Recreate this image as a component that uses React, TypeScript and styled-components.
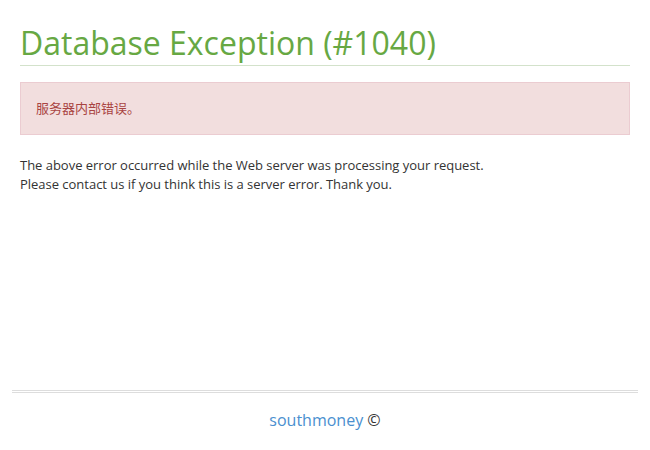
import React from "react";
import styled, { createGlobalStyle } from "styled-components";

const Global = createGlobalStyle`
  html, body { margin: 0; padding: 0; background: #fff; }
  body { font-family: "Open Sans", "Noto Sans CJK SC", sans-serif; color: #333; }
`;

const Page = styled.div`
  display: flex;
  flex-direction: column;
  min-height: 100vh;
`;

const Main = styled.main`
  flex: 1;
  padding: 25px 20px 0;
`;

const Title = styled.h1`
  margin: 0;
  font-size: 32px;
  line-height: 35px;
  font-weight: 400;
  color: #67a843;
  padding-bottom: 5px;
  border-bottom: 1px solid #d3e2cb;
`;

const Alert = styled.div`
  margin-top: 16px;
  padding: 15px 15px 16px;
  background: #f2dede;
  border: 1px solid #ebccd1;
  color: #a94442;
  font-size: 13px;
  line-height: 20px;
`;

const Text = styled.p`
  margin: 21px 0 0;
  font-size: 13px;
  line-height: 19px;
  letter-spacing: -0.02px;
`;

const Footer = styled.footer`
  height: 60px;
  padding: 0 12px;
  box-sizing: border-box;
`;

const Rule = styled.hr`
  margin: 0;
  height: 1px;
  border: 0;
  border-top: 1px solid #ddd;
  border-bottom: 1px solid #ddd;
`;

const FooterText = styled.div`
  text-align: center;
  font-size: 16px;
  line-height: 22px;
  margin-top: 16px;
  color: #333;
`;

const Link = styled.a`
  color: #4a8fcf;
  text-decoration: none;
`;

export default function App() {
  return (
    <Page>
      <Global />
      <Main>
        <Title>Database Exception (#1040)</Title>
        <Alert>服务器内部错误。</Alert>
        <Text>
          The above error occurred while the Web server was processing your request.
          <br />
          Please contact us if you think this is a server error. Thank you.
        </Text>
      </Main>
      <Footer>
        <Rule />
        <FooterText>
          <Link href="#">southmoney</Link> ©
        </FooterText>
      </Footer>
    </Page>
  );
}
